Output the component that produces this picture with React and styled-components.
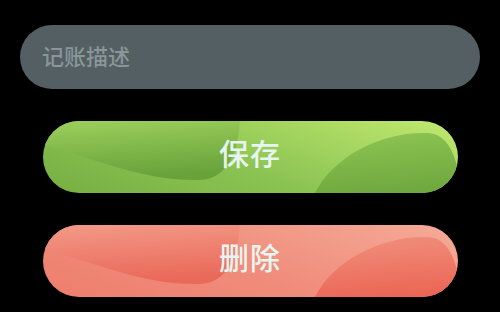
import React from 'react';
import styled, { createGlobalStyle } from 'styled-components';

const GlobalStyle = createGlobalStyle`
  html, body {
    margin: 0;
    padding: 0;
    background: #000;
  }
  body {
    font-family: "Noto Sans CJK SC", "Noto Sans", sans-serif;
  }
`;

const themes = {
  green: {
    base: 'linear-gradient(20deg, #76ae43 0%, #8cc453 45%, #c2ea70 100%)',
    waveTop: '#9dd05d',
    waveBottom: '#68a23a',
    blobTop: '#8dc452',
    blobBottom: '#6fa83f',
  },
  red: {
    base: 'linear-gradient(20deg, #ee7e6d 0%, #f08c7b 45%, #f5ab98 100%)',
    waveTop: '#f39a88',
    waveBottom: '#ea6959',
    blobTop: '#f18f7d',
    blobBottom: '#eb6655',
  },
};

const Page = styled.div`
  width: 500px;
  height: 312px;
  box-sizing: border-box;
  padding: 25px 20px 0;
  display: flex;
  flex-direction: column;
  align-items: center;
`;

const DescInput = styled.input`
  width: 460px;
  height: 64px;
  box-sizing: border-box;
  border: none;
  outline: none;
  border-radius: 32px;
  background: #535f63;
  padding: 0 22px 4px;
  font-family: "Noto Sans CJK SC", "Noto Sans", sans-serif;
  font-size: 22px;
  font-weight: 500;
  color: #e6f3ee;

  &::placeholder {
    color: #8a9697;
  }
`;

const Actions = styled.div`
  margin-top: 32px;
  display: flex;
  flex-direction: column;
  gap: 32px;
`;

const ActionButton = styled.button`
  position: relative;
  width: 415px;
  height: 72px;
  border: none;
  border-radius: 36px;
  overflow: hidden;
  background: ${p => themes[p.$tone].base};
  cursor: pointer;
  padding: 0 0 11px;
  display: flex;
  align-items: center;
  justify-content: center;
`;

const Decor = styled.svg`
  position: absolute;
  inset: 0;
  width: 100%;
  height: 100%;
`;

const Label = styled.span`
  position: relative;
  font-family: "Noto Sans CJK SC", "Noto Sans", sans-serif;
  font-size: 30px;
  font-weight: 500;
  color: #e8f4ef;
  letter-spacing: 1px;
`;

const Button = ({ tone, children }) => {
  const t = themes[tone];
  return (
    <ActionButton $tone={tone}>
      <Decor viewBox="0 0 415 72" preserveAspectRatio="none">
        <defs>
          <linearGradient id={`wave-${tone}`} x1="0" y1="0" x2="0.2" y2="1">
            <stop offset="0" stopColor={t.waveTop} />
            <stop offset="1" stopColor={t.waveBottom} />
          </linearGradient>
          <linearGradient id={`blob-${tone}`} x1="0.3" y1="0" x2="0.5" y2="1">
            <stop offset="0" stopColor={t.blobTop} />
            <stop offset="1" stopColor={t.blobBottom} />
          </linearGradient>
        </defs>
        <path
          d="M0,0 L0,24 C60,40 100,60 157,59 C185,58 195,30 197,0 Z"
          fill={`url(#wave-${tone})`}
        />
        <path
          d="M272,72 C290,35 340,10 385,12 C405,13 412,35 415,50 L415,72 Z"
          fill={`url(#blob-${tone})`}
        />
      </Decor>
      <Label>{children}</Label>
    </ActionButton>
  );
};

export default function App() {
  return (
    <>
      <GlobalStyle />
      <Page>
        <DescInput placeholder="记账描述" />
        <Actions>
          <Button tone="green">保存</Button>
          <Button tone="red">删除</Button>
        </Actions>
      </Page>
    </>
  );
}
